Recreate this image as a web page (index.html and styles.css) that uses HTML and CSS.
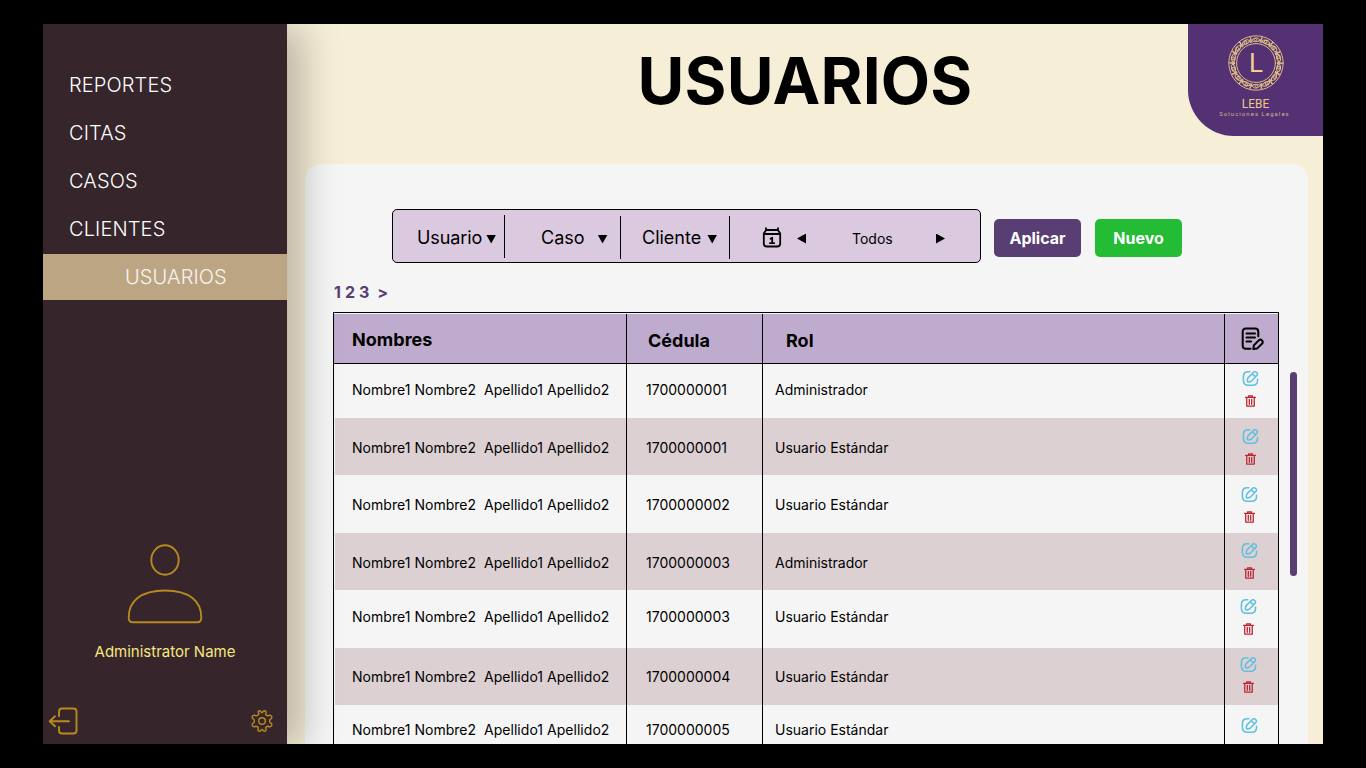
FILE: index.html
```html
<!DOCTYPE html>
<html lang="es">
<head>
<meta charset="utf-8">
<title>Usuarios</title>
<link rel="stylesheet" href="styles.css">
</head>
<body>
<svg class="defs" width="0" height="0">
  <symbol id="edit" viewBox="0 0 24 24"><path d="M11 2.500H9C4 2.500 2 4.500 2 9.500v5C2 19.500 4 21.500 9 21.500h6c5 0 7-2 7-7V13"/><path d="M16 3.600 8.800 10.800c-.6.6-.8 1.200-.9 1.800l-.4 2.800c-.1.900.5 1.500 1.400 1.400l2.700-.4c.6-.1 1.300-.4 1.700-.9L20.700 8.200c1.500-1.500 1.600-3 0-4.600s-3.200-1.500-4.700 0zM14.800 4.900c.6 2 2 3.400 4 4"/></symbol>
  <symbol id="trash" viewBox="0 0 12 13"><path d="M.6 2.600h10.800M3.900 2.400V.9h4.200v1.500M1.900 2.800v9.200h8.200V2.800M4.700 4.700v5.400M7.300 4.700v5.400"/></symbol>
</svg>
<div class="app">
  <aside class="sidebar">
    <nav class="menu">
      <a class="menu-item">REPORTES</a>
      <a class="menu-item">CITAS</a>
      <a class="menu-item">CASOS</a>
      <a class="menu-item">CLIENTES</a>
      <a class="menu-item active">USUARIOS</a>
    </nav>
    <div class="profile">
      <svg class="avatar" width="76" height="80" viewBox="0 0 76 80"><ellipse cx="38" cy="16" rx="13.700" ry="14.700"/><path d="M1.700 73.500C1.700 57 14 46.500 38 46.500s36.300 10.500 36.300 27c0 3-1.300 4.800-4 4.800H5.700c-2.700 0-4-1.800-4-4.800z"/></svg>
      <span class="profile-name">Administrator Name</span>
    </div>
    <div class="side-footer">
      <svg class="exit" width="30" height="28" viewBox="0 0 30 28"><path d="M11 9V4.500C11 2.500 12 1.500 14 1.500h11.500c2 0 3 1 3 3v19c0 2-1 3-3 3H14c-2 0-3-1-3-3V20"/><path d="M21 14.300H2M7 9.300l-5.300 5L7 19.300"/></svg>
      <svg class="gear" width="24" height="24" viewBox="0 0 24 24"><circle cx="12" cy="12" r="3.300"/><path d="M8.900 5.100 8.400 3.400Q7.800 1.800 9.500 1.800q1.200.1 1.700 1.200.8 1.100 1.600 0 .5-1.100 1.700-1.200 1.700 0 1.600 1.600l-.5 1.700q.9 1.700 2.300 1.600l1.700-.4q1.500-.1 2.100 1.200.5 1.500-.8 2.300-1.300.5-1.300 2.200t1.300 2.200q1.300.8.8 2.300-.6 1.300-2.100 1.200l-1.700-.4q-1.400-.1-2.300 1.600l.5 1.700q.1 1.600-1.600 1.600-1.200-.1-1.700-1.200-.8-1.100-1.600 0-.5 1.100-1.700 1.200-1.700 0-1.600-1.600l.5-1.700Q7.500 17.200 6.100 17.300l-1.700.4q-1.500.1-2.100-1.200-.5-1.500.8-2.300Q4.400 13.700 4.400 12T3.100 9.800Q1.800 9 2.300 7.500q.6-1.300 2.100-1.200l1.700.4Q7.500 6.800 8.900 5.100z"/></svg>
    </div>
  </aside>
  <main class="main">
    <header class="header">
      <h1 class="title">USUARIOS</h1>
      <div class="brand">
        <div class="seal">
          <svg class="ring" width="56" height="56" viewBox="0 0 56 56">
            <circle cx="28" cy="28" r="27.200"/><circle cx="28" cy="28" r="19.400"/>
            <g id="links"></g>
          </svg>
          <span class="seal-letter">L</span>
        </div>
        <span class="brand-name">LEBE</span>
        <span class="brand-tag">Soluciones Legales</span>
      </div>
    </header>
    <section class="panel">
      <div class="toolbar">
        <div class="filters">
          <div class="filter usuario">Usuario<i class="down"></i></div>
          <div class="filter caso">Caso<i class="down"></i></div>
          <div class="filter cliente">Cliente<i class="down"></i></div>
          <div class="dates">
            <svg class="calendar" width="20" height="21" viewBox="0 0 20 21"><path d="M5 3h10M4 1.200v2L1.800 6.500V16.500c0 2 1 3 3 3h10.400c2 0 3-1 3-3V6.500L16 3.200v-2M1.800 7h16.400"/><path d="M8.500 11.800l1.700-1V16M8 16.200h4.200"/></svg>
            <i class="prev"></i><span class="range">Todos</span><i class="next"></i>
          </div>
        </div>
        <button class="btn apply">Aplicar</button>
        <button class="btn new">Nuevo</button>
      </div>
      <div class="pages">1 2 3&nbsp; &gt;</div>
      <div class="content">
        <div class="table">
          <div class="row head">
            <div class="cell">Nombres</div><div class="cell">Cédula</div><div class="cell">Rol</div>
            <div class="cell"><svg class="list" width="24" height="24" viewBox="0 0 24 24"><path d="M9.500 21.700H5c-2.300 0-3.300-1-3.300-3.300V4.900c0-2.300 1-3.300 3.300-3.300h9c2.300 0 3.300 1 3.300 3.300v4.300M5.500 6.600h8.500M5.500 10.600h8.500M5.500 14.600h4.600"/><path d="m12.900 18.200 4.800-4.800c1.200-1.200 2.300-1 3.300 0s1.100 2.100 0 3.300l-4.800 4.700-3.900.7z"/></svg></div>
          </div>
          <div class="row r1"><div class="cell">Nombre1 Nombre2&nbsp; Apellido1 Apellido2</div><div class="cell">1700000001</div><div class="cell">Administrador</div><div class="cell"><svg class="edit"><use href="#edit"/></svg><svg class="trash"><use href="#trash"/></svg></div></div>
          <div class="row r2"><div class="cell">Nombre1 Nombre2&nbsp; Apellido1 Apellido2</div><div class="cell">1700000001</div><div class="cell">Usuario Estándar</div><div class="cell"><svg class="edit"><use href="#edit"/></svg><svg class="trash"><use href="#trash"/></svg></div></div>
          <div class="row r3"><div class="cell">Nombre1 Nombre2&nbsp; Apellido1 Apellido2</div><div class="cell">1700000002</div><div class="cell">Usuario Estándar</div><div class="cell"><svg class="edit"><use href="#edit"/></svg><svg class="trash"><use href="#trash"/></svg></div></div>
          <div class="row r4"><div class="cell">Nombre1 Nombre2&nbsp; Apellido1 Apellido2</div><div class="cell">1700000003</div><div class="cell">Administrador</div><div class="cell"><svg class="edit"><use href="#edit"/></svg><svg class="trash"><use href="#trash"/></svg></div></div>
          <div class="row r5"><div class="cell">Nombre1 Nombre2&nbsp; Apellido1 Apellido2</div><div class="cell">1700000003</div><div class="cell">Usuario Estándar</div><div class="cell"><svg class="edit"><use href="#edit"/></svg><svg class="trash"><use href="#trash"/></svg></div></div>
          <div class="row r6"><div class="cell">Nombre1 Nombre2&nbsp; Apellido1 Apellido2</div><div class="cell">1700000004</div><div class="cell">Usuario Estándar</div><div class="cell"><svg class="edit"><use href="#edit"/></svg><svg class="trash"><use href="#trash"/></svg></div></div>
          <div class="row r7"><div class="cell">Nombre1 Nombre2&nbsp; Apellido1 Apellido2</div><div class="cell">1700000005</div><div class="cell">Usuario Estándar</div><div class="cell"><svg class="edit"><use href="#edit"/></svg></div></div>
        </div>
        <div class="scrollbar"></div>
      </div>
    </section>
  </main>
</div>
<script src="seal.js"></script>
</body>
</html>
```
FILE: seal.js
```js
// Interlaced scrolls spaced evenly round the seal.
const links = document.getElementById('links');
for (let i = 0; i < 14; i++) {
  const knot = document.createElementNS('http://www.w3.org/2000/svg', 'path');
  knot.setAttribute('d', 'M22 2C23 8 30 8.500 34.500 3M22.500 7.500C25 1.500 31 1 33.500 7.500M26.500 6c-1.500-2 1-3.500 2-2s-.5 2.500-1 1.500M30 6.500c1.500-2 3-1 2.500.5');
  knot.setAttribute('transform', `rotate(${i * 360 / 14} 28 28)`);
  links.appendChild(knot);
}
```
FILE: styles.css
```css
* { box-sizing: border-box; }
body {
  margin: 0;
  padding: 24px 43px;
  height: 768px;
  overflow: hidden;
  background: #000;
  color: #000;
  font-family: Inter, "Liberation Sans", sans-serif;
}
svg { display: block; flex: none; fill: none; stroke-linecap: round; stroke-linejoin: round; }
.defs { position: absolute; }
.app { display: flex; width: 1280px; height: 720px; overflow: hidden; background: #f7eed7; }

.sidebar {
  position: relative;
  z-index: 1;
  display: flex;
  flex-direction: column;
  width: 244px;
  background: #36252b;
  box-shadow: 15px 4px 36px rgba(0, 0, 0, .25);
}
.menu { padding-top: 38px; }
.menu-item { display: block; height: 48px; padding-left: 26px; line-height: 46px; font-size: 20px; font-weight: 300; letter-spacing: .12px; color: #fff; }
.menu-item.active { height: 46px; padding-left: 82px; background: #bca583; color: #f7f4f0; }
.profile { display: flex; flex-direction: column; align-items: center; padding-top: 244px; }
.avatar { stroke: #b78a20; stroke-width: 1.9; }
.profile-name { margin-top: 18px; line-height: 20px; font-size: 15px; font-weight: 400; color: #f8e67d; }
.side-footer { display: flex; justify-content: space-between; align-items: center; margin: auto 13px 9px 5px; }
.exit { stroke: #b78a20; stroke-width: 1.9; }
.gear { stroke: #b78a20; stroke-width: 1.4; }

.main { width: 1036px; }
.header { display: grid; grid-template-columns: 135px 1fr 135px; height: 140px; }
.title { grid-column: 2; margin: 0; padding-top: 18px; text-align: center; line-height: 77px; font-size: 64px; font-weight: 700; letter-spacing: .2px; }
.brand { display: flex; flex-direction: column; align-items: center; height: 112px; padding-top: 11px; border-bottom-left-radius: 46px; background: #533173; color: #e9c886; }
.seal { display: grid; place-items: center; }
.seal > * { grid-area: 1 / 1; }
.ring { stroke: #e3c184; stroke-width: .95; }
.seal-letter { padding: 0 0 1px 1px; font: 26px/28px Roboto, sans-serif; color: #f1cf8e; }
.brand-name { margin-top: 7px; font: 12px/12px Roboto, sans-serif; }
.brand-tag { margin: 0 2px 0 0; font: 6px/8px Roboto, sans-serif; letter-spacing: 1.05px; white-space: nowrap; color: #d5b48a; }

.panel { width: 1003px; height: 580px; margin-left: 18px; padding: 45px 0 0 28px; border-radius: 16px 16px 0 0; background: #f5f5f5; }
.toolbar { display: flex; align-items: flex-start; padding-left: 59px; }
.filters { display: flex; width: 589px; height: 54px; padding-top: 6px; border: 1px solid #000; border-radius: 5px; background: #dbc9df; }
.filter { display: flex; align-items: center; height: 43px; border-right: 1px solid #000; font-size: 18px; font-weight: 400; }
.usuario { width: 112px; margin-top: -1px; padding: 2px 0 0 24px; gap: 4px; letter-spacing: -.1px; }
.caso { width: 116px; padding: 0 0 0 36px; gap: 13px; }
.cliente { width: 109px; padding-left: 21px; gap: 6px; }
.down { width: 10px; height: 9px; margin-top: 3px; background: #000; clip-path: polygon(0 0, 100% 0, 50% 100%); }
.dates { display: flex; align-items: center; height: 43px; padding: 1px 0 0 32px; }
.calendar { margin-top: -1px; stroke: #000; stroke-width: 1.8; }
.prev { width: 9px; height: 10px; margin: 1px 0 0 15px; background: #000; clip-path: polygon(100% 0, 0 50%, 100% 100%); }
.range { width: 42px; margin-left: 46px; font-size: 14px; font-weight: 400; }
.next { width: 9px; height: 10px; margin: 1px 0 0 42px; background: #000; clip-path: polygon(0 0, 100% 50%, 0 100%); }
.btn { width: 87px; height: 38px; margin: 10px 0 0 13px; padding: 0; border: 0; border-radius: 5px; color: #fff; font: 700 16px/38px Inter, sans-serif; }
.apply { background: #593e74; }
.new { margin-left: 14px; background: #24bc34; }
.pages { margin-top: 19px; padding-left: 1px; line-height: 20px; font-size: 16px; font-weight: 700; letter-spacing: .1px; color: #593e74; }

.content { display: flex; align-items: flex-start; margin-top: 10px; }
.table { width: 946px; height: 432px; border: solid #000; border-width: 1px 1px 0; overflow: hidden; }
.row { --text: 20px; --icons: 10px; display: grid; grid-template-columns: 292px 136px 462px 54px; height: 57px; font-size: 14px; line-height: 20px; }
.cell { padding: var(--text) 0 0 18px; border-left: 1px solid #000; white-space: nowrap; }
.cell:first-child { border-left: 0; letter-spacing: .03px; }
.cell:nth-child(2) { padding-left: 19px; }
.cell:nth-child(3) { padding-left: 12px; }
.cell:nth-child(4) { padding: var(--icons) 0 0 17px; }
.head { --text: 16px; height: 51px; padding-top: 1px; border-bottom: 1px solid #000; background: #bfabcd content-box; font-size: 18px; font-weight: 700; }
.head .cell:nth-child(2) { padding: 17px 0 0 21px; }
.head .cell:nth-child(3) { padding: 17px 0 0 23px; }
.head .cell:nth-child(4) { padding: 13px 0 0 16px; }
.list { stroke: #000; stroke-width: 2; }
.r1 { height: 54px; --text: 16px; --icons: 6px; }
.r2 { --icons: 10px; }
.r3 { height: 58px; --icons: 11px; }
.r4 { --icons: 9px; }
.r5 { height: 58px; --text: 17px; --icons: 8px; }
.r6 { --text: 19px; --icons: 8px; }
.r7 { --text: 15px; --icons: 12px; }
.r2, .r4, .r6 { background: linear-gradient(90deg, #f5f5f5 1px, #dcd0d2 1px); }
.edit { width: 17px; height: 17px; stroke: #5fc0df; stroke-width: 2.2; }
.trash { width: 11px; height: 12px; margin: 8px 0 0 3px; stroke: #bd2530; stroke-width: 1.4; }
.r3 .edit, .r4 .edit, .r7 .edit { margin-left: -1px; }
.r3 .trash, .r4 .trash { margin-left: 2px; }
.r5 .edit, .r6 .edit { margin-left: -2px; }
.r5 .trash, .r6 .trash { margin-left: 1px; }
.scrollbar { width: 7px; height: 204px; margin: 60px 0 0 11px; border-radius: 4px; background: #593e74; }
```
